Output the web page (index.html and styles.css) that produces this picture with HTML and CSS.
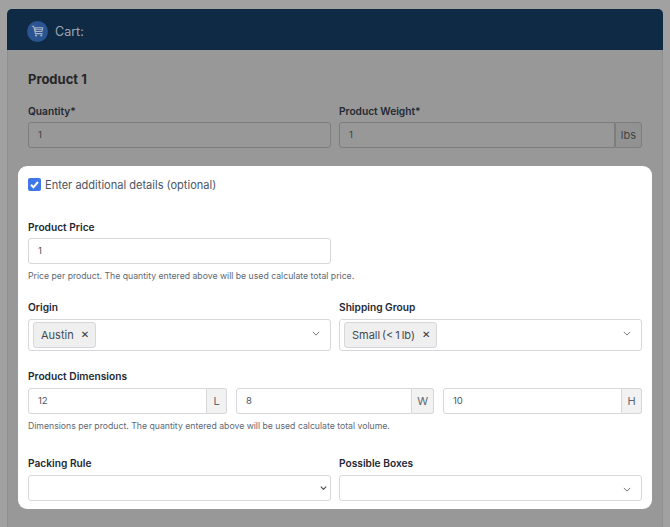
FILE: index.html
```html
<!DOCTYPE html>
<html lang="en">
<head>
<meta charset="utf-8">
<title>Cart</title>
<link rel="stylesheet" href="styles.css">
</head>
<body>
<main class="panel">
  <header class="panel-head">
    <span class="cart-badge">
      <svg viewBox="0 0 16 16" width="14" height="14"><path d="M1 2h2.4l.5 1.6h10.3l-1.3 5.6H5.3l.3 1.2h7.6v1.2H4.6L2.6 3.2H1z" fill="#a9b4c4"/><rect x="5.2" y="5" width="7.4" height="1" fill="#2a5592"/><rect x="5.4" y="7" width="6.8" height="1" fill="#2a5592"/><circle cx="5.8" cy="13.2" r="1.2" fill="#a9b4c4"/><circle cx="11.8" cy="13.2" r="1.2" fill="#a9b4c4"/></svg>
    </span>
    <span class="cart-title">Cart:</span>
  </header>
  <div class="panel-body">
    <h2 class="product-title">Product 1</h2>
    <div class="two-col top-row">
      <div class="field">
        <label class="label">Quantity*</label>
        <div class="input dim">1</div>
      </div>
      <div class="field">
        <label class="label">Product Weight*</label>
        <div class="group dim">
          <div class="input">1</div>
          <div class="addon">lbs</div>
        </div>
      </div>
    </div>
    <section class="card">
      <div class="check-row">
        <span class="checkbox">
          <svg viewBox="0 0 13 13" width="13" height="13"><path d="M3 6.8l2.4 2.5L10 4" fill="none" stroke="#fff" stroke-width="2"/></svg>
        </span>
        <span class="check-label">Enter additional details (optional)</span>
      </div>
      <div class="two-col price-row">
        <div class="field">
          <label class="label">Product Price</label>
          <div class="input">1</div>
        </div>
      </div>
      <p class="help">Price per product. The quantity entered above will be used calculate total price.</p>
      <div class="two-col origin-row">
        <div class="field">
          <label class="label">Origin</label>
          <div class="select tall">
            <span class="tag">Austin <span class="tag-x">✕</span></span>
            <svg class="chev" viewBox="0 0 10 6" width="8" height="5"><path d="M1 1l4 4 4-4" fill="none" stroke="#555" stroke-width="1"/></svg>
          </div>
        </div>
        <div class="field">
          <label class="label">Shipping Group</label>
          <div class="select tall">
            <span class="tag">Small (&lt; 1 lb) <span class="tag-x">✕</span></span>
            <svg class="chev" viewBox="0 0 10 6" width="8" height="5"><path d="M1 1l4 4 4-4" fill="none" stroke="#555" stroke-width="1"/></svg>
          </div>
        </div>
      </div>
      <div class="field dims-field">
        <label class="label">Product Dimensions</label>
        <div class="three-col">
          <div class="group"><div class="input">12</div><div class="addon">L</div></div>
          <div class="group"><div class="input">8</div><div class="addon">W</div></div>
          <div class="group"><div class="input">10</div><div class="addon">H</div></div>
        </div>
      </div>
      <p class="help">Dimensions per product. The quantity entered above will be used calculate total volume.</p>
      <div class="two-col packing-row">
        <div class="field">
          <label class="label">Packing Rule</label>
          <div class="select">
            <svg class="chev small" viewBox="0 0 10 6" width="7" height="4"><path d="M1 1l4 4 4-4" fill="none" stroke="#444" stroke-width="1.6"/></svg>
          </div>
        </div>
        <div class="field">
          <label class="label">Possible Boxes</label>
          <div class="select">
            <svg class="chev" viewBox="0 0 10 6" width="8" height="5"><path d="M1 1l4 4 4-4" fill="none" stroke="#555" stroke-width="1"/></svg>
          </div>
        </div>
      </div>
    </section>
  </div>
</main>
</body>
</html>
```

FILE: styles.css
```css
* { box-sizing: border-box; }
html, body { height: 100%; }
body {
  margin: 0;
  padding: 9px 7px 0;
  background: #a1a1a1;
  font-family: "Inter", "Liberation Sans", sans-serif;
  color: #3a4450;
  overflow: hidden;
}
.panel {
  height: 518px;
  background: #989898;
  border-radius: 5px 5px 0 0;
  border-left: 1px solid #8f8f8f;
  border-right: 1px solid #8f8f8f;
  display: flex;
  flex-direction: column;
}
.panel-head {
  height: 41px;
  margin: 0 -1px;
  flex: none;
  background: #0f2a45;
  border-radius: 5px 5px 0 0;
  display: flex;
  align-items: center;
  padding: 3px 0 0 20px;
  gap: 7px;
}
.cart-badge {
  width: 21px;
  height: 21px;
  border-radius: 50%;
  background: #2a5592;
  display: flex;
  align-items: center;
  justify-content: center;
}
.cart-title { color: #9fa7b0; font-size: 12.5px; }
.panel-body { padding: 21px 20px 0; }
.product-title {
  margin: 0;
  font-size: 13px;
  line-height: 16px;
  font-weight: 700;
  color: #262626;
}
.two-col { display: grid; grid-template-columns: 303px 303px; gap: 8px; }
.three-col { display: grid; grid-template-columns: 199px 198px 199px; gap: 9px; }
.top-row { margin-top: 17px; }
.field { display: flex; flex-direction: column; min-width: 0; }
.label {
  display: block;
  font-size: 10.2px;
  line-height: 14px;
  font-weight: 600;
  color: #1f2933;
  margin-bottom: 4px;
}
.origin-row .label, .dims-field .label, .packing-row .label { margin-bottom: 5px; }
.input {
  height: 26px;
  border: 1px solid #d5d7da;
  border-radius: 3px;
  background: #fff;
  font-size: 9.5px;
  line-height: 24px;
  padding-left: 9px;
  color: #4a5460;
  flex: 1;
  min-width: 0;
}
.input.dim { background: #989898; border-color: #7d7d7d; color: #3d3d3d; }
.group { display: flex; height: 26px; }
.group .input { border-radius: 3px 0 0 3px; }
.addon {
  flex: none;
  min-width: 20px;
  padding: 0 5px;
  border: 1px solid #d5d7da;
  border-left: 0;
  border-radius: 0 3px 3px 0;
  background: #f2f2f3;
  font-size: 11px;
  line-height: 24px;
  color: #5d666f;
  text-align: center;
}
.group.dim .input { background: #989898; border-color: #7d7d7d; color: #3d3d3d; }
.group.dim .addon { background: #929292; border-color: #7d7d7d; border-left: 1px solid #7d7d7d; color: #444; }
.card {
  margin: 18px -10px 0;
  height: 343px;
  padding: 11px 10px 0;
  background: #fff;
  border-radius: 9px;
}
.check-row { display: flex; align-items: center; gap: 4px; height: 15px; }
.checkbox {
  width: 13px;
  height: 13px;
  border-radius: 2px;
  background: #3f76e8;
  display: flex;
}
.check-label { font-size: 11.05px; color: #4b5563; }
.price-row { margin-top: 28px; }
.help { margin: 6px 0 0; font-size: 8.7px; line-height: 12px; color: #5e6873; }
.origin-row { margin-top: 18px; }
.select {
  height: 26px;
  position: relative;
  display: flex;
  align-items: center;
  border: 1px solid #d5d7da;
  border-radius: 3px;
  background: #fff;
  padding-left: 4px;
}
.select.tall { height: 32px; }
.tag {
  height: 26px;
  display: inline-flex;
  align-items: center;
  gap: 7px;
  padding: 0 6px 0 7px;
  border: 1px solid #d5d7da;
  border-radius: 3px;
  background: #efefef;
  font-size: 11px;
  word-spacing: -1.2px;
  color: #3f4954;
}
.tag-x { font-family: "DejaVu Sans", sans-serif; font-size: 10px; line-height: 10px; color: #333; }
.chev { position: absolute; right: 10px; top: 11px; }
.chev.small { top: 10px; right: 3px; }
.dims-field { margin-top: 18px; }
.packing-row { margin-top: 24px; }
```
